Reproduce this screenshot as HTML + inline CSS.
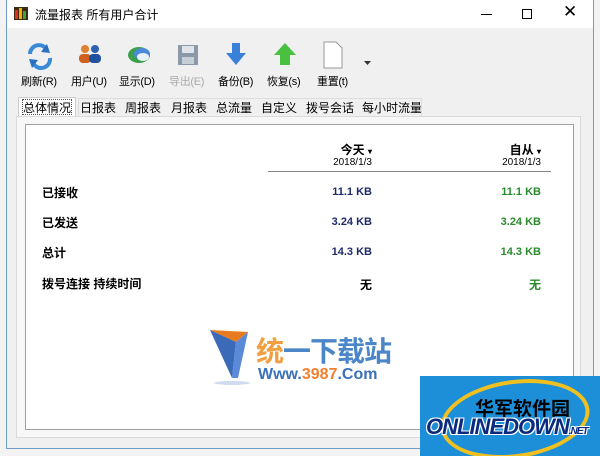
<!DOCTYPE html>
<html><head><meta charset="utf-8">
<style>
*{margin:0;padding:0;box-sizing:border-box}
body{width:600px;height:456px;background:#f3f3f3;position:relative;overflow:hidden;font-family:"Liberation Sans","Noto Sans CJK SC",sans-serif;font-size:12px;color:#000}
.win{position:absolute;left:6px;top:-1px;width:588px;height:450px;border:1px solid #6e9ccb;border-top:none;background:#f0f0f0}
.title{position:absolute;left:0;top:0;width:586px;height:29px;background:#fff}
.abs{position:absolute}
.tb{position:absolute;top:73px;font-size:11px;white-space:nowrap;letter-spacing:-0.3px}
.tabs span{position:absolute;top:99px;font-size:12px;white-space:nowrap}
.lbl{position:absolute;left:42px;font-weight:bold;font-size:12px}
.v{position:absolute;font-weight:bold;font-size:11px;text-align:right;width:80px}
.b{color:#1f2a6b}.g{color:#2b8a2b}
</style></head><body>
<div class="win">
 <div class="title"></div>
</div>
<div class="abs" style="left:14px;top:7px;width:14px;height:13px;background:#3a2a10"></div>
<div class="abs" style="left:15px;top:10px;width:3px;height:9px;background:#e03020"></div>
<div class="abs" style="left:19px;top:8px;width:3px;height:11px;background:#f0b000"></div>
<div class="abs" style="left:23px;top:11px;width:3px;height:8px;background:#40a040"></div>
<div class="abs" style="left:35px;top:6px;font-size:12px">流量报表 所有用户合计</div>
<div class="abs" style="left:481px;top:14px;width:11px;height:1px;background:#000"></div>
<div class="abs" style="left:522px;top:9px;width:10px;height:10px;border:1px solid #000"></div>
<div class="abs" style="left:563px;top:2px;font-size:17px">✕</div>
<svg class="abs" style="left:0;top:40px" width="380" height="32">
 <g fill="none" stroke-width="4"><path d="M30 14 A9 9 0 0 1 47 10" stroke="#3a8ad8"/><path d="M50 18 A9 9 0 0 1 33 23" stroke="#3a8ad8"/></g>
 <path d="M47 4 L50 13 L41 12Z M32 28 L29 19 L38 20Z" fill="#2a70c0"/>
 <circle cx="85" cy="9" r="4" fill="#e08030"/><rect x="79" y="14" width="12" height="9" rx="4" fill="#d06020"/>
 <circle cx="95" cy="9" r="4" fill="#3060b0"/><rect x="89" y="14" width="12" height="9" rx="4" fill="#2050a0"/>
 <ellipse cx="139" cy="15" rx="11" ry="8" fill="#3aa04a"/><ellipse cx="142" cy="14" rx="8" ry="6" fill="#4a8ad8"/><ellipse cx="143" cy="17" rx="6" ry="4" fill="#e8f0f8"/>
 <rect x="178" y="5" width="20" height="20" fill="#8a98a8"/><rect x="182" y="6" width="12" height="7" fill="#e0e4ea"/><rect x="182" y="17" width="12" height="7" fill="#c8ced6"/>
 <path d="M232 3h8v10h6l-10 12-10-12h6z" fill="#3a80d8"/>
 <path d="M285 3l11 12h-6v10h-10v-10h-6z" fill="#4ac040"/>
 <path d="M324 2h12l6 6v20h-18z" fill="#fff" stroke="#999"/>
 <path d="M364 21h7l-3.5 4z" fill="#333"/>
</svg>
<div class="tb" style="left:21px">刷新(R)</div>
<div class="tb" style="left:71px">用户(U)</div>
<div class="tb" style="left:119px">显示(D)</div>
<div class="tb" style="left:169px;color:#aaa">导出(E)</div>
<div class="tb" style="left:218px">备份(B)</div>
<div class="tb" style="left:267px">恢复(s)</div>
<div class="tb" style="left:317px">重置(t)</div>
<div class="abs" style="left:18px;top:97px;width:58px;height:20px;background:#fff;border:1px solid #ccc;border-bottom:none"></div>
<div class="abs" style="left:22px;top:99px;width:50px;height:16px;border:1px dotted #555"></div>
<div class="tabs">
<span style="left:23px">总体情况</span><span style="left:80px">日报表</span><span style="left:125px">周报表</span><span style="left:171px">月报表</span><span style="left:216px">总流量</span><span style="left:261px">自定义</span><span style="left:306px">拨号会话</span><span style="left:362px">每小时流量</span>
</div>
<div class="abs" style="left:78px;top:98px;width:344px;height:18px;border:1px solid #ddd;border-bottom:none"></div>
<div class="abs" style="left:16px;top:116px;width:565px;height:322px;background:#f7f7f7;border:1px solid #dadada"></div>
<div class="abs" style="left:25px;top:124px;width:549px;height:306px;background:#fff;border:1px solid #a0a0a0"></div>
<div class="abs" style="left:310px;top:141px;width:62px;text-align:right;font-weight:bold;font-size:12px">今天 <span style="font-size:8px">▾</span></div>
<div class="abs" style="left:310px;top:157px;width:62px;text-align:right;font-size:10px">2018/1/3</div>
<div class="abs" style="left:480px;top:141px;width:61px;text-align:right;font-weight:bold;font-size:12px">自从 <span style="font-size:8px">▾</span></div>
<div class="abs" style="left:480px;top:157px;width:61px;text-align:right;font-size:10px">2018/1/3</div>
<div class="abs" style="left:268px;top:171px;width:283px;height:1px;background:#888"></div>
<div class="lbl" style="top:184px">已接收</div>
<div class="lbl" style="top:214px">已发送</div>
<div class="lbl" style="top:244px">总计</div>
<div class="lbl" style="top:275px">拨号连接 持续时间</div>
<div class="v b" style="left:292px;top:186px">11.1 KB</div>
<div class="v b" style="left:292px;top:216px">3.24 KB</div>
<div class="v b" style="left:292px;top:246px">14.3 KB</div>
<div class="v" style="left:292px;top:276px;font-size:12px">无</div>
<div class="v g" style="left:461px;top:186px">11.1 KB</div>
<div class="v g" style="left:461px;top:216px">3.24 KB</div>
<div class="v g" style="left:461px;top:246px">14.3 KB</div>
<div class="v g" style="left:461px;top:276px;font-size:12px">无</div>
<svg class="abs" style="left:208px;top:328px" width="50" height="60">
 <path d="M2 2 L40 4 L28 14 Z" fill="#e87a20"/><path d="M2 2 L28 14 L24 50 Z" fill="#3a6ab8"/><path d="M28 14 L40 4 L30 50 L24 50Z" fill="#5a8ad8"/>
 <ellipse cx="24" cy="55" rx="18" ry="2" fill="#cfdcee"/>
</svg>
<div class="abs" style="left:256px;top:330px;font-size:28px;font-weight:bold;color:#4a86c8;letter-spacing:-1px"><span style="color:#f0a040">统</span>一下载站</div>
<div class="abs" style="left:258px;top:366px;font-size:16px;font-weight:bold;color:#3a70b8">Www.<span style="color:#f08030">3987</span>.Com</div>
<div class="abs" style="left:420px;top:376px;width:180px;height:80px;background:#1c8fd8;overflow:hidden">
 <div class="abs" style="left:20px;top:4px;width:150px;height:78px;border:4px solid #f0c020;border-radius:50%;transform:rotate(-8deg)"></div>
 <div class="abs" style="left:55px;top:18px;font-size:19px;font-weight:bold;color:#000">华军软件园</div>
 <div class="abs" style="left:6px;top:38px;font-size:22px;font-weight:bold;font-style:italic;color:#0a2a80;letter-spacing:-1px;text-shadow:1px 1px 0 #fff,-1px -1px 0 #fff,1px -1px 0 #fff,-1px 1px 0 #fff">ONLINEDOWN<span style="font-size:10px">.NET</span></div>
</div>
</body></html>
